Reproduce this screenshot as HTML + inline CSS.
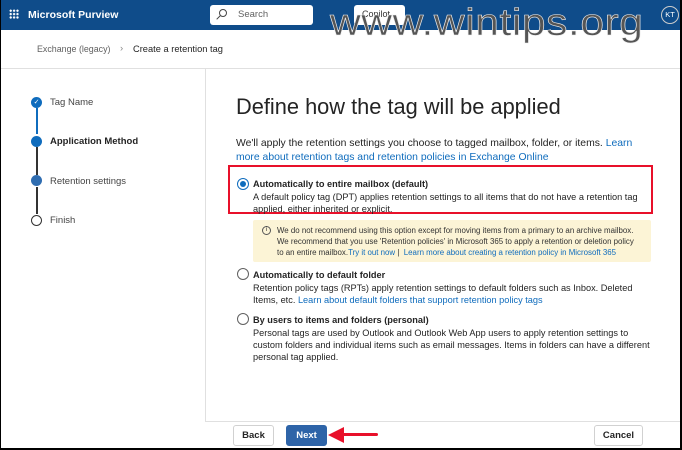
<!DOCTYPE html>
<html><head><meta charset="utf-8"><style>
*{margin:0;padding:0;box-sizing:border-box}
body{width:682px;height:450px;overflow:hidden;background:#fff;font-family:"Liberation Sans",sans-serif;position:relative;color:#242424}
.a{position:absolute;white-space:nowrap}
.hdr{left:0;top:0;width:682px;height:30px;background:#0f4c8a}
.t{font-size:9.2px;line-height:12px}
.lnk{color:#0f6cbd}
.rad{position:absolute;width:12px;height:12px;border:1px solid #616161;border-radius:50%;background:#fff}
.btn{position:absolute;top:425px;height:21px;border:1px solid #d1d1d1;border-radius:3px;font-size:9.5px;font-weight:bold;text-align:center;line-height:19px;background:#fff}
</style></head><body>
<div class="a hdr"></div>
<div class="a" style="left:9px;top:9px;width:10px;height:10px;background:radial-gradient(circle,#fff 1px,transparent 1.3px) 0 0/3.4px 3.4px"></div>
<div class="a" style="left:28px;top:9px;color:#fff;font-weight:bold;font-size:10.5px">Microsoft Purview</div>
<div class="a" style="left:210px;top:5px;width:103px;height:20px;background:#fff;border-radius:3px"></div>
<div class="a" style="left:219px;top:9px;width:8px;height:8px;border:1.2px solid #444;border-radius:50%"></div>
<div class="a" style="left:216px;top:17px;width:5px;height:1.2px;background:#444;transform:rotate(-45deg)"></div>
<div class="a" style="left:238px;top:9px;color:#616161;font-size:9.5px">Search</div>
<div class="a" style="left:354px;top:5px;width:51px;height:20px;background:#fff;border-radius:3px"></div>
<div class="a" style="left:362px;top:9px;font-size:9px;color:#333">Copilot</div>
<div class="a" style="left:661px;top:6px;width:18px;height:18px;border:1px solid #ccc;border-radius:50%;color:#fff;font-size:7.5px;text-align:center;line-height:16px">KT</div>
<div class="a" style="left:330px;top:2px;font-size:38px;color:#555;letter-spacing:0.5px;-webkit-text-stroke:0.6px #eee;transform:scaleX(1.12);transform-origin:left">www.wintips.org</div>

<div class="a" style="left:37px;top:44px;font-size:8.9px;color:#616161">Exchange (legacy)</div>
<div class="a" style="left:120px;top:43px;font-size:9.5px;color:#888">&#8250;</div>
<div class="a" style="left:133px;top:44px;font-size:9.3px;color:#242424">Create a retention tag</div>
<div class="a" style="left:0;top:68px;width:682px;height:1px;background:#e0e0e0"></div>
<div class="a" style="left:205px;top:68px;width:1px;height:354px;background:#e0e0e0"></div>

<div class="a" style="left:36px;top:108px;width:2px;height:26px;background:#0f6cbd"></div>
<div class="a" style="left:36px;top:147px;width:1.5px;height:28px;background:#333"></div>
<div class="a" style="left:36px;top:187px;width:1.5px;height:27px;background:#333"></div>
<div class="a" style="left:31px;top:97px;width:11px;height:11px;border-radius:50%;background:#0f6cbd;color:#fff;font-size:7px;text-align:center;line-height:11px">✓</div>
<div class="a" style="left:31px;top:136px;width:11px;height:11px;border-radius:50%;background:#0f6cbd"></div>
<div class="a" style="left:31px;top:175px;width:11px;height:11px;border-radius:50%;background:#2f6db1"></div>
<div class="a" style="left:31px;top:215px;width:11px;height:11px;border-radius:50%;border:1.5px solid #333;background:#fff"></div>
<div class="a" style="left:50px;top:97px;font-size:9.5px;color:#444">Tag Name</div>
<div class="a" style="left:50px;top:136px;font-size:9.5px;font-weight:bold">Application Method</div>
<div class="a" style="left:50px;top:176px;font-size:9.5px;color:#444">Retention settings</div>
<div class="a" style="left:50px;top:215px;font-size:9.5px;color:#444">Finish</div>

<div class="a" style="left:236px;top:94px;font-size:21.8px;color:#242424">Define how the tag will be applied</div>
<div class="a t" style="left:236px;top:137px;font-size:10.4px;line-height:14px">We'll apply the retention settings you choose to tagged mailbox, folder, or items. <span class="lnk">Learn</span><br><span class="lnk">more about retention tags and retention policies in Exchange Online</span></div>

<div class="a" style="left:228px;top:165px;width:425px;height:49px;border:2px solid #e8102a"></div>
<div class="rad" style="left:237px;top:178px;border-color:#0f6cbd"><div style="margin:2px;width:6px;height:6px;border-radius:50%;background:#0f6cbd"></div></div>
<div class="a t" style="left:253px;top:178px;font-weight:bold">Automatically to entire mailbox (default)</div>
<div class="a t" style="left:253px;top:191px">A default policy tag (DPT) applies retention settings to all items that do not have a retention tag<br>applied, either inherited or explicit.</div>

<div class="a" style="left:253px;top:220px;width:398px;height:42px;background:#fcf4d6;border-radius:2px"></div>
<div class="a" style="left:262px;top:226px;width:9px;height:9px;border:1px solid #555;border-radius:50%;font-size:6px;text-align:center;line-height:7px">i</div>
<div class="a" style="left:277px;top:225px;font-size:7.9px;line-height:11px;color:#333">We do not recommend using this option except for moving items from a primary to an archive mailbox.<br>We recommend that you use 'Retention policies' in Microsoft 365 to apply a retention or deletion policy<br>to an entire mailbox.<span class="lnk">Try it out now</span> | &nbsp;<span class="lnk">Learn more about creating a retention policy in Microsoft 365</span></div>

<div class="rad" style="left:237px;top:268px"></div>
<div class="a t" style="left:253px;top:269px;font-weight:bold">Automatically to default folder</div>
<div class="a t" style="left:253px;top:282px">Retention policy tags (RPTs) apply retention settings to default folders such as Inbox. Deleted<br>Items, etc. <span class="lnk">Learn about default folders that support retention policy tags</span></div>

<div class="rad" style="left:237px;top:313px"></div>
<div class="a t" style="left:253px;top:314px;font-weight:bold">By users to items and folders (personal)</div>
<div class="a t" style="left:253px;top:327px">Personal tags are used by Outlook and Outlook Web App users to apply retention settings to<br>custom folders and individual items such as email messages. Items in folders can have a different<br>personal tag applied.</div>

<div class="a" style="left:206px;top:421px;width:476px;height:1px;background:#e0e0e0"></div>
<div class="btn" style="left:233px;width:41px">Back</div>
<div class="btn" style="left:286px;width:41px;background:#2e64a8;border-color:#2e64a8;color:#fff">Next</div>
<div class="btn" style="left:594px;width:49px">Cancel</div>
<div class="a" style="left:340px;top:433px;width:38px;height:3px;background:#e8102a;border-radius:2px"></div>
<div class="a" style="left:328px;top:427px;width:0;height:0;border-top:8px solid transparent;border-bottom:8px solid transparent;border-right:16px solid #e8102a"></div>

<div class="a" style="left:0;top:0;width:682px;height:450px;border-left:1px solid #000;border-right:2px solid #000;border-bottom:2px solid #000"></div>
</body></html>
